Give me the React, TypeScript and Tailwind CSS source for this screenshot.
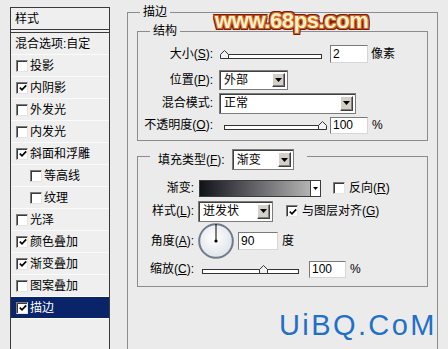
import React from 'react'

const layers = [
  { label: '投影', checked: false },
  { label: '内阴影', checked: true },
  { label: '外发光', checked: false },
  { label: '内发光', checked: false },
  { label: '斜面和浮雕', checked: true },
  { label: '等高线', checked: false, indent: true },
  { label: '纹理', checked: false, indent: true },
  { label: '光泽', checked: false },
  { label: '颜色叠加', checked: true },
  { label: '渐变叠加', checked: true },
  { label: '图案叠加', checked: false },
  { label: '描边', checked: true, selected: true },
]

function Check({ checked }: { checked: boolean }) {
  return (
    <span className="flex h-[12px] w-[12px] shrink-0 items-center justify-center border border-t-[#7c7c7c] border-l-[#7c7c7c] border-r-[#e4e4e4] border-b-[#e4e4e4] bg-white shadow-[inset_1px_1px_0_#3a3a3a]">
      {checked && (
        <svg width="8" height="8" viewBox="0 0 8 8" className="ml-[1px] mt-[1px]">
          <path d="M0.8 3.6 L3 5.8 L7.2 1.4" fill="none" stroke="#000" strokeWidth="1.7" />
        </svg>
      )}
    </span>
  )
}

function Arrow() {
  return (
    <svg width="7" height="4" viewBox="0 0 7 4">
      <path d="M0 0H7L3.5 4Z" fill="#000" />
    </svg>
  )
}

function Select({ value, className }: { value: string; className: string }) {
  return (
    <div className={`flex items-center border border-[#7b7b7b] bg-white shadow-[inset_1px_1px_0_#404040] ${className}`}>
      <span className="flex-1 pl-[4px] leading-none">{value}</span>
      <span className="mr-[2px] flex h-[calc(100%-4px)] w-[13px] items-center justify-center border border-t-white border-l-white border-r-[#404040] border-b-[#404040] bg-[#d4d0c8] shadow-[inset_-1px_-1px_0_#808080]">
        <Arrow />
      </span>
    </div>
  )
}

function Field({ value, className }: { value: string; className: string }) {
  return (
    <div className={`flex items-center border border-t-[#7a7a7a] border-l-[#7a7a7a] border-r-[#d6d6d6] border-b-[#d6d6d6] bg-white pl-[2px] leading-none ${className}`}>
      {value}
    </div>
  )
}

function Slider({ className, pct, trackWidth }: { className: string; pct: number; trackWidth: number }) {
  return (
    <div className={`relative h-[9px] shrink-0 ${className}`}>
      <div className="absolute bottom-0 left-0 right-0 h-[5px] border border-[#333] bg-white" />
      <svg
        className="absolute top-0"
        style={{ left: (trackWidth * pct) / 100 - 4.5 }}
        width="9"
        height="9"
        viewBox="0 0 9 9"
      >
        <path d="M0.5 8.5V4.5L4.5 0.5L8.5 4.5V8.5Z" fill="#f2f2f2" stroke="#333" />
      </svg>
    </div>
  )
}

function Dial() {
  return (
    <svg width="36" height="36" viewBox="0 0 36 36" className="shrink-0">
      <defs>
        <radialGradient id="dialFill" cx="45%" cy="40%" r="60%">
          <stop offset="0%" stopColor="#ffffff" />
          <stop offset="100%" stopColor="#dfe4ea" />
        </radialGradient>
      </defs>
      <circle cx="18" cy="18" r="16.8" fill="url(#dialFill)" stroke="#6f7b8b" strokeWidth="2" />
      <line x1="18" y1="18" x2="18" y2="1" stroke="#000" strokeWidth="1" />
      <circle cx="18" cy="18" r="1.6" fill="#000" />
    </svg>
  )
}

function LayerPanel() {
  return (
    <div className="ml-[10px] mt-[7px] h-[360px] w-[100px] shrink-0 border border-[#3a3a3a] bg-[#efefef]">
      <div className="flex h-[22px] items-center border-b border-[#3a3a3a] pl-[4px]">样式</div>
      <div className="mt-[2px] border-t border-[#3a3a3a]" />
      <div className="flex h-[22px] items-center border-b border-[#fbfbfb] pl-[4px]">混合选项:自定</div>
      {layers.map((l) => (
        <div
          key={l.label}
          className={`flex h-[22px] items-center gap-[2px] border-b border-[#fbfbfb] ${l.indent ? 'pl-[19px]' : 'pl-[5px]'} ${
            l.selected ? 'bg-[#0a246a] text-white' : ''
          }`}
        >
          <Check checked={l.checked} />
          <span className="leading-none">{l.label}</span>
        </div>
      ))}
    </div>
  )
}

function StructureGroup() {
  return (
    <fieldset className="mx-[9px] mt-[3px] border border-[#8c8c8c] pb-[4px]">
      <legend className="ml-[12px] px-[3px] leading-[16px]">结构</legend>
      <div className="mt-[4px] flex h-[22px] items-center">
        <span className="w-[75px] text-right">
          大小(<u>S</u>):
        </span>
        <Slider className="ml-[9px] w-[100px]" trackWidth={100} pct={2} />
        <Field value="2" className="ml-[8px] h-[18px] w-[38px]" />
        <span className="ml-[3px]">像素</span>
      </div>
      <div className="mt-[4px] flex h-[22px] items-center">
        <span className="w-[75px] text-right">
          位置(<u>P</u>):
        </span>
        <Select value="外部" className="ml-[6px] h-[20px] w-[69px]" />
      </div>
      <div className="mt-[1px] flex h-[22px] items-center">
        <span className="w-[75px] text-right">混合模式:</span>
        <Select value="正常" className="ml-[6px] h-[21px] w-[137px]" />
      </div>
      <div className="flex h-[22px] items-center">
        <span className="w-[75px] text-right">
          不透明度(<u>O</u>):
        </span>
        <Slider className="ml-[11px] w-[98px]" trackWidth={98} pct={100} />
        <Field value="100" className="ml-[8px] h-[17px] w-[38px]" />
        <span className="ml-[4px]">%</span>
      </div>
    </fieldset>
  )
}

function FillGroup() {
  return (
    <fieldset className="mx-[9px] mt-[2px] border border-[#8c8c8c] pb-[7px]">
      <legend className="ml-[12px] pl-[8px] pr-[13px] pt-[6px]">
        <div className="flex items-center">
          <span>
            填充类型(<u>F</u>):
          </span>
          <Select value="渐变" className="ml-[7px] h-[21px] w-[62px]" />
        </div>
      </legend>
      <div className="mt-[7px] flex h-[22px] items-center">
        <span className="w-[56px] text-right">渐变:</span>
        <div className="ml-[5px] flex h-[17px] border border-[#3c3c3c]">
          <div className="w-[110px] bg-[linear-gradient(to_right,#12121b,#b3b3b3)]" />
          <div className="flex w-[10px] items-center justify-center border-l border-[#3c3c3c] bg-white">
            <svg width="5" height="3" viewBox="0 0 5 3">
              <path d="M0 0H5L2.5 3Z" fill="#000" />
            </svg>
          </div>
        </div>
        <span className="ml-[12px]">
          <Check checked={false} />
        </span>
        <span className="ml-[4px]">
          反向(<u>R</u>)
        </span>
      </div>
      <div className="mt-[1px] flex h-[22px] items-center">
        <span className="w-[56px] text-right">
          样式(<u>L</u>):
        </span>
        <Select value="迸发状" className="ml-[4px] h-[21px] w-[75px]" />
        <span className="ml-[13px]">
          <Check checked />
        </span>
        <span className="ml-[4px]">
          与图层对齐(<u>G</u>)
        </span>
      </div>
      <div className="flex h-[37px] items-center">
        <span className="w-[56px] text-right">
          角度(<u>A</u>):
        </span>
        <span className="ml-[4px] flex">
          <Dial />
        </span>
        <Field value="90" className="ml-[4px] h-[18px] w-[40px]" />
        <span className="ml-[4px]">度</span>
      </div>
      <div className="flex h-[20px] items-center">
        <span className="w-[56px] text-right">
          缩放(<u>C</u>):
        </span>
        <Slider className="ml-[8px] w-[97px]" trackWidth={97} pct={63} />
        <Field value="100" className="ml-[10px] h-[17px] w-[37px]" />
        <span className="ml-[4px]">%</span>
      </div>
    </fieldset>
  )
}

export default function App() {
  return (
    <div className="relative flex h-[349px] w-[448px] overflow-hidden bg-[#ebebeb] font-['Liberation_Sans','Noto_Sans_CJK_SC',sans-serif] text-[12px] text-black">
      <LayerPanel />
      <fieldset className="ml-[17px] mt-[4px] h-[400px] w-[311px] shrink-0 border border-[#8c8c8c]">
        <legend className="ml-[12px] px-[3px] leading-[16px]">描边</legend>
        <StructureGroup />
        <FillGroup />
      </fieldset>

      {/* watermarks */}
      <div className="pointer-events-none absolute left-[215px] top-[10px] text-[22px] font-bold leading-none tracking-[-0.4px] text-[#fff1c6] [text-shadow:1px_0_0_#d0652a,-1px_0_0_#d0652a,0_1px_0_#d0652a,0_-1px_0_#d0652a,1px_1px_0_#d0652a,-1px_-1px_0_#d0652a,1px_-1px_0_#d0652a,-1px_1px_0_#d0652a,2px_0_0_#7a1c0c,-2px_0_0_#7a1c0c,0_2px_0_#7a1c0c,0_-2px_0_#7a1c0c,2px_2px_0_#7a1c0c,-2px_-2px_0_#7a1c0c,2px_-2px_0_#7a1c0c,-2px_2px_0_#7a1c0c]">
        www.68ps.com
      </div>
      <div className="pointer-events-none absolute left-[279px] top-[311px] text-[29px] leading-none tracking-[2.4px] text-[#1f70c8]">
        UiBQ.CoM
      </div>
    </div>
  )
}
